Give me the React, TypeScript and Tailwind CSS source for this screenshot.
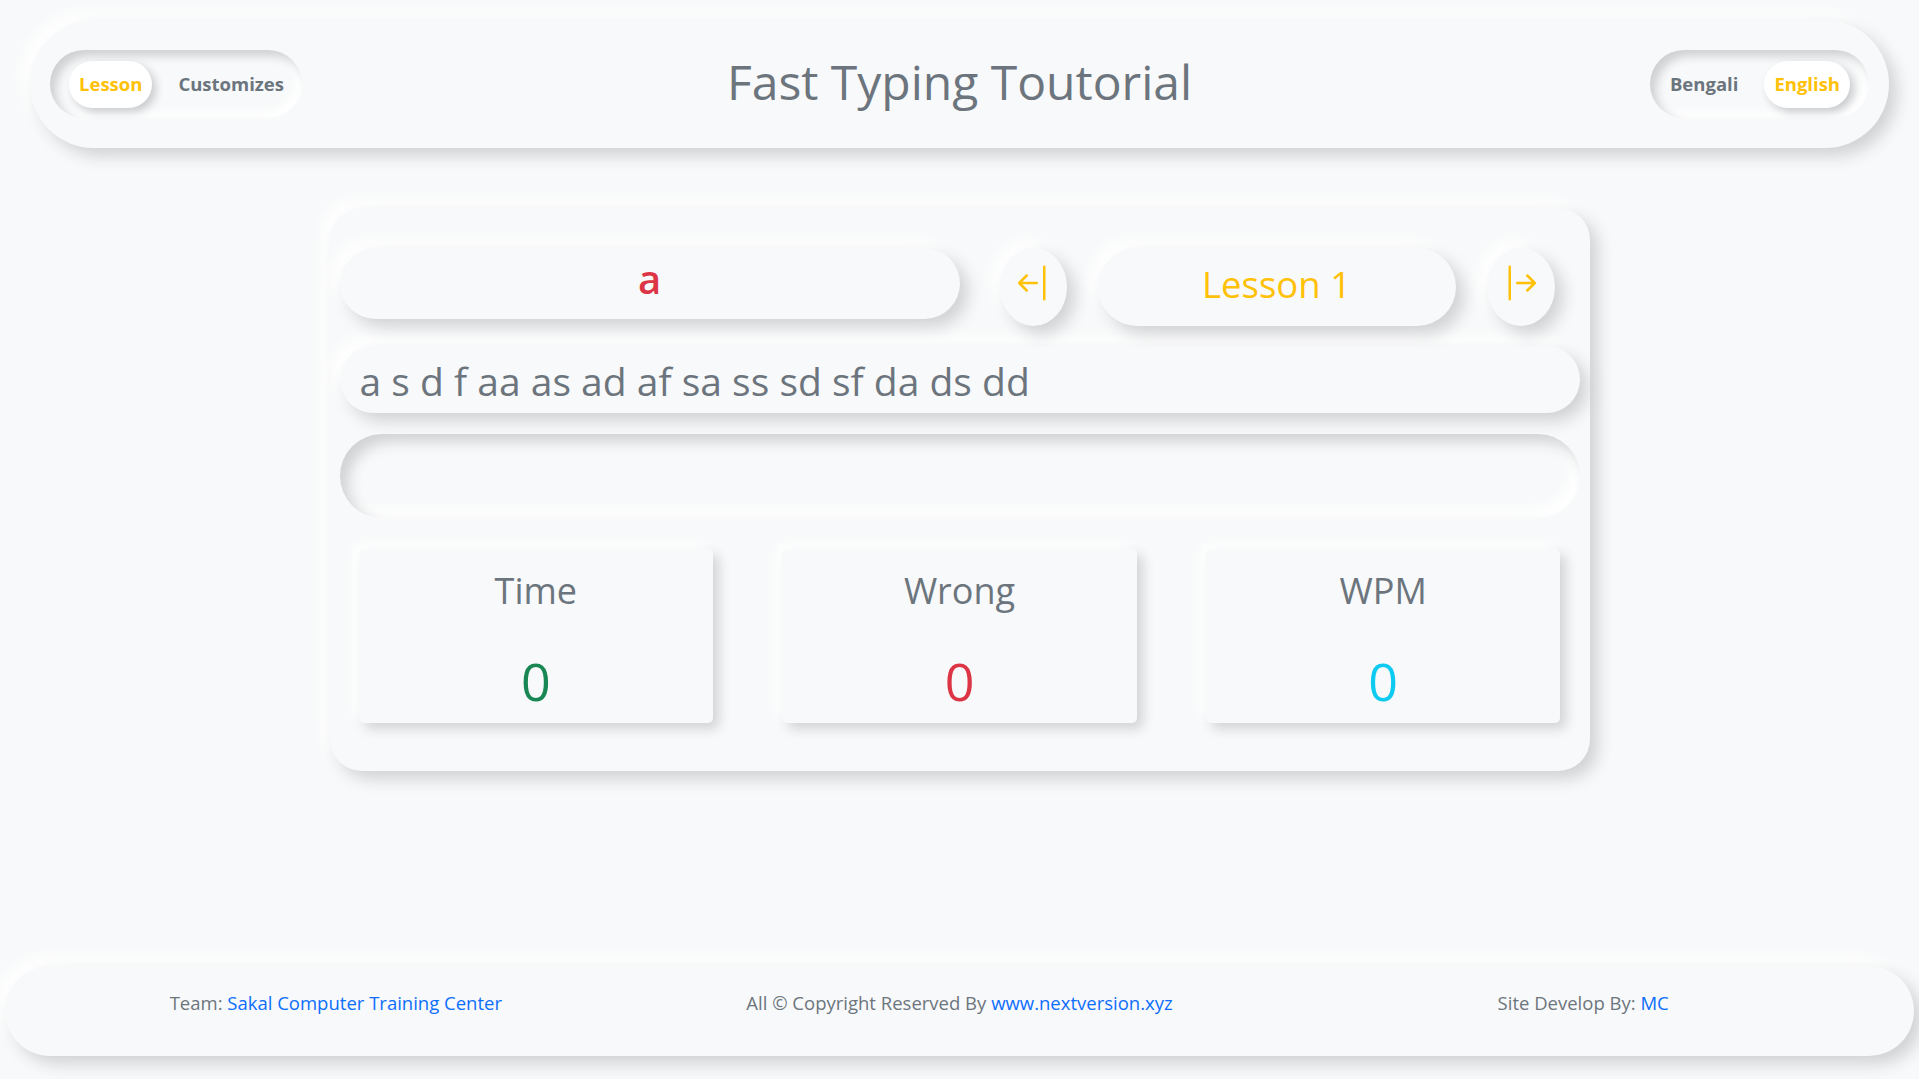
import { BsArrowBarLeft, BsArrowBarRight } from "react-icons/bs";

// neumorphic shadows
const raised = "shadow-[8px_8px_16px_#d1d2d4,-8px_-8px_16px_#ffffff]";
const raisedSm = "shadow-[6px_6px_12px_#d3d4d6,-6px_-6px_12px_#ffffff]";
const sunken = "shadow-[inset_6px_6px_10px_#cfd0d2,inset_-6px_-6px_10px_#ffffff]";

function Toggle({
  items,
  active,
  className,
}: {
  items: string[];
  active: string;
  className: string;
}) {
  return (
    <div className={`flex items-center h-[68px] rounded-full bg-[#f8f9fa] gap-[16px] ${sunken} ${className}`}>
      {items.map((item) => (
        <button
          key={item}
          className={
            item === active
              ? "h-[47px] px-[10px] rounded-full bg-white text-[#ffc107] text-[18.5px] font-bold shadow-[4px_4px_8px_#c9cacc]"
              : "h-[47px] px-[10px] rounded-full text-[#6c757d] text-[18.5px] font-bold"
          }
        >
          {item}
        </button>
      ))}
    </div>
  );
}

function Stat({ label, value, color }: { label: string; value: number; color: string }) {
  return (
    <div className={`h-[174px] rounded-[5px] bg-[#f8f9fa] flex flex-col items-center pt-[20px] ${raisedSm}`}>
      <div className="text-[36px] leading-[1.2] text-[#6c757d]">{label}</div>
      <div className={`mt-[38px] text-[52px] leading-[1.2] ${color}`}>{value}</div>
    </div>
  );
}

export default function App() {
  return (
    <div className="min-h-screen bg-[#f8f9fa] flex flex-col font-['Open_Sans',sans-serif]">
      {/* header */}
      <header className={`mx-[30px] mt-[20px] h-[128px] rounded-full bg-[#f8f9fa] px-[20px] grid grid-cols-[1fr_auto_1fr] items-center ${raised}`}>
        <Toggle items={["Lesson", "Customizes"]} active="Lesson" className="justify-self-start pl-[19px] pr-[8px]" />
        <h1 className="text-[48px] leading-[1.2] text-[#6c757d] pb-[4px]">Fast Typing Toutorial</h1>
        <Toggle items={["Bengali", "English"]} active="English" className="justify-self-end pl-[10px] pr-[19px]" />
      </header>

      {/* typing card */}
      <main className={`mt-[60px] mx-auto w-[1260px] rounded-[32px] bg-[#f8f9fa] px-[10px] pt-[40px] pb-[48px] ${raised}`}>
        <div className="flex items-start">
          <div className={`w-[620px] h-[71px] rounded-full bg-[#f8f9fa] flex items-center justify-center pb-[10px] ${raised}`}>
            <span className="text-[40px] font-semibold text-[#dc3545]">a</span>
          </div>
          <button className={`ml-[40px] w-[67px] h-[78px] rounded-[50%] bg-[#f8f9fa] flex items-center justify-center pb-[9px] text-[#ffc107] ${raised}`}>
            <BsArrowBarLeft size={40} />
          </button>
          <div className={`ml-[31px] w-[358px] h-[78px] rounded-full bg-[#f8f9fa] flex items-center justify-center pb-[6px] ${raised}`}>
            <span className="text-[36.5px] text-[#ffc107]">Lesson 1</span>
          </div>
          <button className={`ml-[31px] w-[68px] h-[78px] rounded-[50%] bg-[#f8f9fa] flex items-center justify-center pb-[9px] text-[#ffc107] ${raised}`}>
            <BsArrowBarRight size={40} />
          </button>
        </div>

        <div className={`mt-[20px] h-[67px] rounded-full bg-[#f8f9fa] flex items-center pl-[20px] pt-[4px] ${raised}`}>
          <span className="text-[39px] text-[#6c757d]">a s d f aa as ad af sa ss sd sf da ds dd</span>
        </div>

        <input
          type="text"
          className="mt-[21px] block w-full h-[84px] rounded-full bg-[#f8f9fa] px-[30px] text-[36px] text-[#6c757d] outline-none shadow-[inset_8px_8px_14px_#d1d2d4,inset_-8px_-8px_14px_#ffffff]"
        />

        <div className="mt-[31px] grid grid-cols-3 gap-[69px] px-[19px]">
          <Stat label="Time" value={0} color="text-[#198754]" />
          <Stat label="Wrong" value={0} color="text-[#dc3545]" />
          <Stat label="WPM" value={0} color="text-[#0dcaf0]" />
        </div>
      </main>

      {/* footer */}
      <footer className={`mt-auto mb-[23px] mx-[5px] h-[90px] rounded-full bg-[#f8f9fa] px-[19px] pb-[16px] grid grid-cols-3 items-center text-center text-[18.5px] text-[#6c757d] ${raised}`}>
        <p>
          Team: <a className="text-[#0d6efd]">Sakal Computer Training Center</a>
        </p>
        <p>
          All © Copyright Reserved By <a className="text-[#0d6efd]">www.nextversion.xyz</a>
        </p>
        <p>
          Site Develop By: <a className="text-[#0d6efd]">MC</a>
        </p>
      </footer>
    </div>
  );
}
